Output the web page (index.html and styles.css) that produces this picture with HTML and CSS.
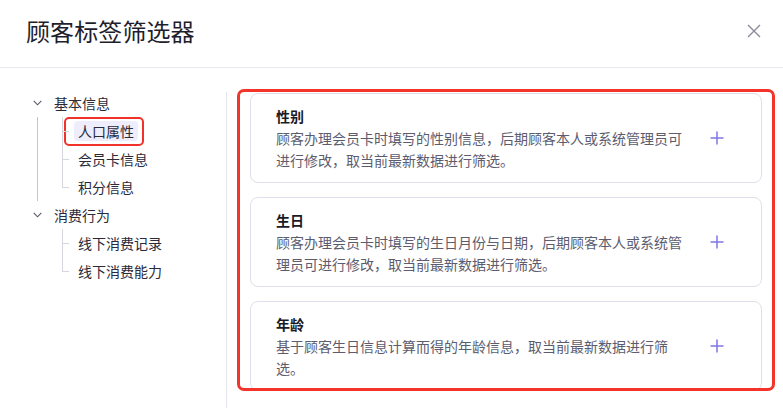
FILE: index.html
```html
<!DOCTYPE html>
<html lang="zh-CN">
<head>
  <meta charset="UTF-8">
  <meta name="viewport" content="width=device-width, initial-scale=1.0">
  <title>顾客标签筛选器</title>
  <link rel="stylesheet" href="styles.css">
</head>
<body>
  <div class="dialog">
    <div class="dialog-header">
      <h1 class="dialog-title">顾客标签筛选器</h1>
      <button class="close-btn" aria-label="关闭">
        <svg width="14" height="14" viewBox="0 0 14 14"><path d="M1 1L13 13M13 1L1 13" stroke="#8a8a99" stroke-width="1.4" fill="none"/></svg>
      </button>
    </div>

    <div class="dialog-body">
      <aside class="sidebar">
        <ul class="tree">
          <li>
            <div class="node-row">
              <svg class="caret" width="9" height="6" viewBox="0 0 9 6"><path d="M0.7 0.8L4.5 4.8L8.3 0.8" stroke="#55556a" stroke-width="1.1" fill="none"/></svg>
              基本信息
            </div>
            <ul class="leaves is-open">
              <li class="leaf"><span class="leaf-label is-active">人口属性<span class="mark"></span></span></li>
              <li class="leaf"><span class="leaf-label">会员卡信息</span></li>
              <li class="leaf"><span class="leaf-label">积分信息</span></li>
            </ul>
          </li>
          <li>
            <div class="node-row">
              <svg class="caret" width="9" height="6" viewBox="0 0 9 6"><path d="M0.7 0.8L4.5 4.8L8.3 0.8" stroke="#55556a" stroke-width="1.1" fill="none"/></svg>
              消费行为
            </div>
            <ul class="leaves">
              <li class="leaf"><span class="leaf-label">线下消费记录</span></li>
              <li class="leaf"><span class="leaf-label">线下消费能力</span></li>
            </ul>
          </li>
        </ul>
      </aside>

      <div class="content">
        <div class="tag-card">
          <div class="tag-text">
            <div class="tag-name">性别</div>
            <div class="tag-desc">顾客办理会员卡时填写的性别信息，后期顾客本人或系统管理员可进行修改，取当前最新数据进行筛选。</div>
          </div>
          <button class="add-btn" aria-label="添加">
            <svg width="14" height="14" viewBox="0 0 14 14"><path d="M7 0.5V13.5M0.5 7H13.5" stroke="#7f76e6" stroke-width="1.5" fill="none"/></svg>
          </button>
        </div>

        <div class="tag-card">
          <div class="tag-text">
            <div class="tag-name">生日</div>
            <div class="tag-desc">顾客办理会员卡时填写的生日月份与日期，后期顾客本人或系统管理员可进行修改，取当前最新数据进行筛选。</div>
          </div>
          <button class="add-btn" aria-label="添加">
            <svg width="14" height="14" viewBox="0 0 14 14"><path d="M7 0.5V13.5M0.5 7H13.5" stroke="#7f76e6" stroke-width="1.5" fill="none"/></svg>
          </button>
        </div>

        <div class="tag-card">
          <div class="tag-text">
            <div class="tag-name">年龄</div>
            <div class="tag-desc">基于顾客生日信息计算而得的年龄信息，取当前最新数据进行筛选。</div>
          </div>
          <button class="add-btn" aria-label="添加">
            <svg width="14" height="14" viewBox="0 0 14 14"><path d="M7 0.5V13.5M0.5 7H13.5" stroke="#7f76e6" stroke-width="1.5" fill="none"/></svg>
          </button>
        </div>
      </div>
    </div>
  </div>
</body>
</html>
```

FILE: styles.css
```css
* {
  box-sizing: border-box;
}
body {
  margin: 0;
  background: #fff;
  font-family: "Noto Sans CJK SC", "Noto Sans", sans-serif;
  color: #22222f;
}
.dialog {
  width: 783px;
  height: 408px;
  overflow: hidden;
}
.dialog-header {
  height: 68px;
  display: flex;
  align-items: center;
  justify-content: space-between;
  padding: 0 22px 6px 26px;
  border-bottom: 1px solid #e8e8ee;
}
.dialog-title {
  margin: 0;
  font-size: 24px;
  font-weight: 400;
  color: #1e1e2c;
  letter-spacing: 0.1px;
}
.close-btn {
  border: none;
  background: none;
  padding: 0;
  width: 14px;
  height: 14px;
  cursor: pointer;
}
.close-btn svg {
  display: block;
}
.dialog-body {
  display: flex;
  padding-top: 21px;
  height: 340px;
}
.sidebar {
  width: 227px;
  flex: none;
  margin-top: 3px;
  border-right: 1px solid #e4e4ea;
}
.tree,
.leaves {
  list-style: none;
  margin: 0;
  padding: 0;
}
.tree {
  margin-top: -3px;
  font-size: 14px;
}
.node-row {
  height: 28px;
  display: flex;
  align-items: center;
  padding-left: 33px;
  color: #2a2a38;
}
.caret {
  margin-right: 12px;
}
.leaves {
  margin-left: 37px;
  border-left: 1px solid transparent;
}
.leaves.is-open {
  border-left-color: #c2bef2;
}
.leaf {
  position: relative;
  height: 28px;
  display: flex;
  align-items: center;
  padding-left: 36px;
}
.leaf::before {
  content: "";
  position: absolute;
  left: 24px;
  top: 0;
  bottom: 0;
  border-left: 1px solid #d6d6de;
}
.leaf:last-child::before {
  bottom: 50%;
}
.leaf::after {
  content: "";
  position: absolute;
  left: 24px;
  top: 50%;
  width: 7px;
  border-top: 1px solid #d6d6de;
}
.leaf-label {
  position: relative;
  line-height: 20px;
  padding: 0 4px;
  border-radius: 4px;
  color: #2a2a38;
}
.leaf-label.is-active {
  background: #eeedfc;
}
.mark {
  position: absolute;
  left: -10px;
  top: -4px;
  right: -6px;
  bottom: -5px;
  border: 2.5px solid #f0322a;
  border-radius: 5px;
}
.content {
  margin-left: 10px;
  width: 538px;
  height: 302px;
  border: 3px solid #f4332a;
  border-radius: 7px;
  overflow: hidden;
  padding: 1px 10px 0;
}
.tag-card {
  display: flex;
  align-items: center;
  border: 1px solid #dfdeea;
  border-radius: 8px;
  padding: 11px 37px 11px 25px;
  margin-bottom: 14px;
  min-height: 90px;
}
.tag-text {
  width: 412px;
}
.tag-name {
  font-size: 14px;
  line-height: 22px;
  font-weight: 700;
  color: #1a1a26;
}
.tag-desc {
  font-size: 14px;
  line-height: 22px;
  color: #5c5c6e;
}
.add-btn {
  margin-left: auto;
  border: none;
  background: none;
  padding: 0;
  width: 14px;
  height: 14px;
  cursor: pointer;
}
.add-btn svg {
  display: block;
}
```
